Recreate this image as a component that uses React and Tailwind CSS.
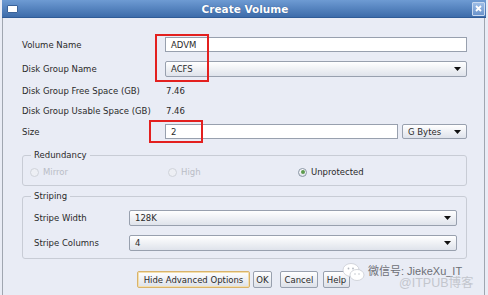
export default function App() {
  const Combo = ({ value, className }) => (
    <div className={"flex items-center justify-between border border-[#98a0ae] rounded-[2px] bg-gradient-to-b from-[#ffffff] to-[#dfe3eb] px-[5px] " + className}>
      <span>{value}</span>
      <svg width="7" height="4" viewBox="0 0 7 4"><path d="M0 0H7L3.5 4Z" fill="#111" /></svg>
    </div>
  );
  const Input = ({ value, className }) => (
    <div className={"flex items-center border border-[#98a0ae] bg-white px-[5px] " + className}>
      <span>{value}</span>
    </div>
  );
  const Radio = ({ label, disabled, checked, className }) => (
    <div className={"flex items-center gap-[4px] " + className}>
      <div className={"w-[9px] h-[9px] rounded-full border flex items-center justify-center " + (disabled ? "border-[#cfd3da] bg-[#edeff4]" : "border-[#8a96a4] bg-gradient-to-b from-[#ffffff] to-[#dfe3ea]")}>
        {checked && <div className="w-[4px] h-[4px] rounded-full bg-[#5c9a4c]" />}
      </div>
      <span className={disabled ? "text-[#b9bdc6]" : ""}>{label}</span>
    </div>
  );
  const Btn = ({ children, className }) => (
    <div className={"h-[17px] flex items-center justify-center rounded-[2px] border bg-gradient-to-b from-[#ffffff] to-[#dde1e9] " + className}>
      {children}
    </div>
  );
  return (
    <div className="w-[488px] h-[295px] bg-[#e9ecf5] relative overflow-hidden font-['DejaVu_Sans',sans-serif] text-[8.5px] text-[#2a2a2a] leading-[12px]">
      {/* Title bar */}
      <div className="h-[18px] ml-[2px] mr-[2px] flex items-center bg-gradient-to-b from-[#6e9bd3] to-[#3d6caa] border-b border-[#2f5b96]">
        <div className="ml-[5px] w-[11px] h-[8px] bg-white border border-[#3a6299] rounded-[1px]" />
        <div className="flex-1 text-center text-white font-bold text-[10.5px] leading-[14px] [text-shadow:0_0_1px_#2a4d80]">Create Volume</div>
        <div className="mr-[1px] w-[13px] h-[14px] bg-gradient-to-b from-[#9dbde6] to-[#6b94cc] border border-[#c9daf0] rounded-[1px] flex items-center justify-center">
          <svg width="7" height="7" viewBox="0 0 7 7"><path d="M1 1L6 6M6 1L1 6" stroke="#fff" strokeWidth="1.8" /></svg>
        </div>
      </div>
      {/* Body */}
      <div className="h-[277px] ml-[2px] mr-[3px] border-l border-r border-[#a0a6b0]">
        <div className="pl-[19px] pr-[17px] pt-[19px]">
          <div className="flex items-center h-[15px]">
            <div className="w-[143px]">Volume Name</div>
            <Input value="ADVM" className="flex-1 h-[15px]" />
          </div>
          <div className="flex items-center h-[16px] mt-[9px]">
            <div className="w-[143px]">Disk Group Name</div>
            <Combo value="ACFS" className="flex-1 h-[16px]" />
          </div>
          <div className="flex items-center h-[16px] mt-[6px]">
            <div className="w-[143px]">Disk Group Free Space (GB)</div>
            <div className="pl-[1px]">7.46</div>
          </div>
          <div className="flex items-center h-[16px] mt-[4px]">
            <div className="w-[143px]">Disk Group Usable Space (GB)</div>
            <div className="pl-[1px]">7.46</div>
          </div>
          <div className="flex items-center h-[15px] mt-[5px]">
            <div className="w-[143px]">Size</div>
            <Input value="2" className="w-[233px] h-[15px]" />
            <Combo value="G Bytes" className="ml-[4px] flex-1 h-[15px]" />
          </div>

          <fieldset className="mt-[10px] border border-[#c8ccd5] rounded-[3px] p-0">
            <legend className="ml-[8px] px-[3px]">Redundancy</legend>
            <div className="flex items-center pl-[7px] pt-[5px] pb-[7px] h-[24px]">
              <Radio label="Mirror" disabled className="w-[138px]" />
              <Radio label="High" disabled className="w-[130px]" />
              <Radio label="Unprotected" checked />
            </div>
          </fieldset>

          <fieldset className="mt-[4px] border border-[#c8ccd5] rounded-[3px] p-0">
            <legend className="ml-[8px] px-[3px]">Striping</legend>
            <div className="pl-[11px] pr-[9px] pt-[8px] pb-[7px]">
              <div className="flex items-center h-[16px]">
                <div className="w-[95px]">Stripe Width</div>
                <Combo value="128K" className="flex-1 h-[16px]" />
              </div>
              <div className="flex items-center h-[16px] mt-[9px]">
                <div className="w-[95px]">Stripe Columns</div>
                <Combo value="4" className="flex-1 h-[16px]" />
              </div>
            </div>
          </fieldset>
        </div>
        <div className="flex justify-center mt-[12px]">
          <Btn className="w-[113px] border-[#d9b36a] shadow-[inset_0_0_0_1px_#f3dfae]">Hide Advanced Options</Btn>
          <Btn className="w-[19px] ml-[3px] border-[#98a0ae]">OK</Btn>
          <Btn className="w-[38px] ml-[8px] border-[#98a0ae]">Cancel</Btn>
          <Btn className="w-[27px] ml-[5px] border-[#98a0ae]">Help</Btn>
        </div>
      </div>

      {/* Red annotation boxes */}
      <div className="absolute left-[155px] top-[34px] w-[54px] h-[48px] border-2 border-[#e3201f]" />
      <div className="absolute left-[149px] top-[120px] w-[54px] h-[23px] border-2 border-[#e3201f]" />

      {/* Watermark */}
      <div className="absolute left-[342px] top-[262px] w-[24px] h-[22px]">
        <svg width="24" height="22" viewBox="0 0 24 22">
          <ellipse cx="9" cy="8" rx="8" ry="6.5" fill="#fff" stroke="#c9ccd3" strokeWidth="0.8" />
          <ellipse cx="15" cy="13" rx="7" ry="5.5" fill="#fff" stroke="#c9ccd3" strokeWidth="0.8" />
          <circle cx="6.5" cy="6.5" r="0.9" fill="#b5b9c1" />
          <circle cx="11" cy="6.5" r="0.9" fill="#b5b9c1" />
          <circle cx="13" cy="12" r="0.7" fill="#b5b9c1" />
          <circle cx="17" cy="12" r="0.7" fill="#b5b9c1" />
        </svg>
      </div>
      <div className="absolute left-[368px] top-[264px] text-[11px] leading-[14px] text-[#6d6f75] font-['Liberation_Sans','Noto_Sans_CJK_SC',sans-serif] whitespace-nowrap">微信号: JiekeXu_IT</div>
      <div className="absolute left-[399px] top-[276px] text-[12.5px] leading-[14px] text-[#c3c6cd] font-['Liberation_Sans','Noto_Sans_CJK_SC',sans-serif] whitespace-nowrap">@ITPUB博客</div>
    </div>
  );
}
